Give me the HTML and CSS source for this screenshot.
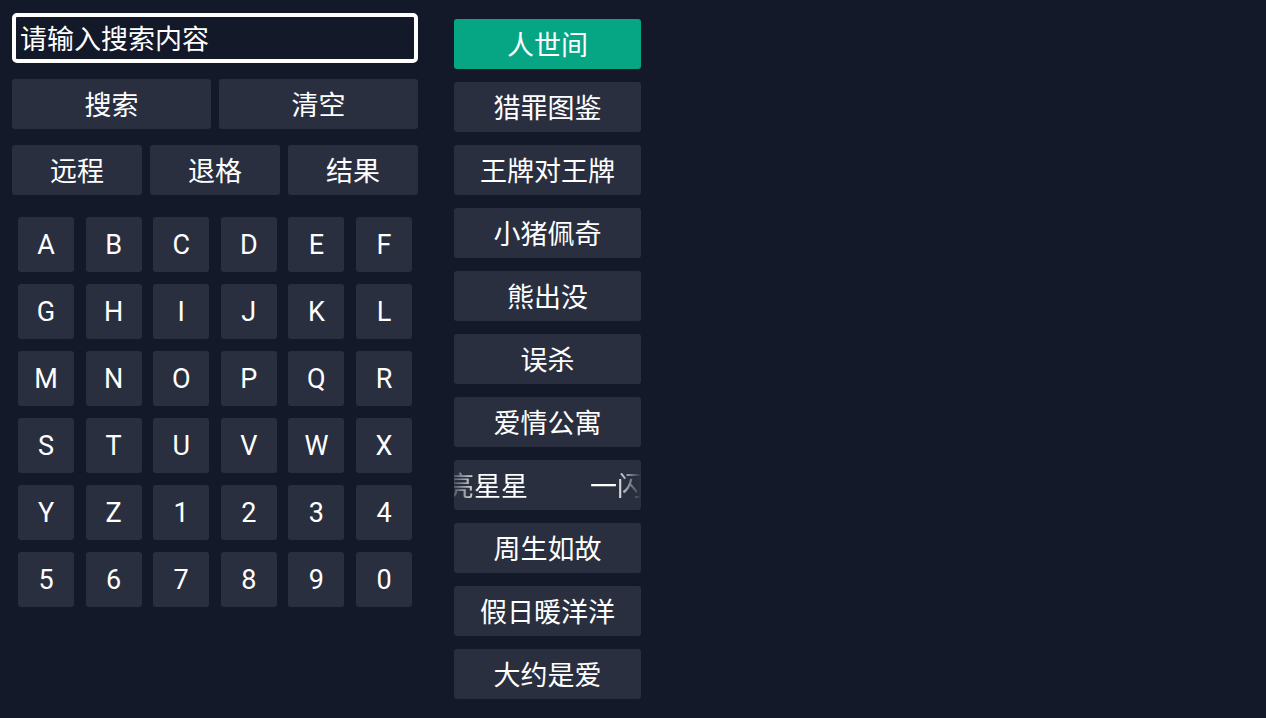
FILE: index.html
```html
<!DOCTYPE html>
<html lang="zh">
<head>
<meta charset="utf-8">
<title>搜索</title>
<link rel="stylesheet" href="styles.css">
</head>
<body>
<div class="page">
  <div class="left">
    <input class="search" type="text" placeholder="请输入搜索内容">
    <div class="row two">
      <div class="btn">搜索</div>
      <div class="btn">清空</div>
    </div>
    <div class="row three">
      <div class="btn">远程</div>
      <div class="btn">退格</div>
      <div class="btn">结果</div>
    </div>
    <div class="keys">
      <div class="key">A</div><div class="key">B</div><div class="key">C</div><div class="key">D</div><div class="key">E</div><div class="key">F</div>
      <div class="key">G</div><div class="key">H</div><div class="key">I</div><div class="key">J</div><div class="key">K</div><div class="key">L</div>
      <div class="key">M</div><div class="key">N</div><div class="key">O</div><div class="key">P</div><div class="key">Q</div><div class="key">R</div>
      <div class="key">S</div><div class="key">T</div><div class="key">U</div><div class="key">V</div><div class="key">W</div><div class="key">X</div>
      <div class="key">Y</div><div class="key">Z</div><div class="key">1</div><div class="key">2</div><div class="key">3</div><div class="key">4</div>
      <div class="key">5</div><div class="key">6</div><div class="key">7</div><div class="key">8</div><div class="key">9</div><div class="key">0</div>
    </div>
  </div>
  <div class="results">
    <div class="item active">人世间</div>
    <div class="item">猎罪图鉴</div>
    <div class="item">王牌对王牌</div>
    <div class="item">小猪佩奇</div>
    <div class="item">熊出没</div>
    <div class="item">误杀</div>
    <div class="item">爱情公寓</div>
    <div class="item marquee"><span class="track"><span class="seg">一闪一闪亮星星</span><span class="seg">一闪一闪亮星星</span></span></div>
    <div class="item">周生如故</div>
    <div class="item">假日暖洋洋</div>
    <div class="item">大约是爱</div>
  </div>
</div>
</body>
</html>
```
FILE: styles.css
```css
html, body {
  margin: 0;
  padding: 0;
  background: #131929;
  height: 100%;
  overflow: hidden;
}
body {
  font-family: Roboto, "Noto Sans CJK SC", sans-serif;
  color: #ffffff;
}
.page {
  display: flex;
  padding: 13px 0 0 12px;
}
.left {
  width: 406px;
  display: flex;
  flex-direction: column;
}
.search {
  box-sizing: border-box;
  width: 406px;
  height: 50px;
  margin: 0;
  border: 4px solid #ffffff;
  border-radius: 5px;
  background: #131929;
  color: #ffffff;
  font-family: "Noto Sans CJK SC", sans-serif;
  font-size: 27px;
  padding: 0 0 2px 4px;
  outline: none;
}
.search::placeholder {
  color: #ffffff;
  opacity: 1;
}
.row {
  display: grid;
  margin-top: 16px;
  height: 50px;
  column-gap: 8px;
}
.row.two { grid-template-columns: 1fr 1fr; }
.row.three { grid-template-columns: 1fr 1fr 1fr; }
.btn {
  background: #2a2f40;
  border-radius: 3px;
  display: flex;
  align-items: center;
  justify-content: center;
  font-family: "Noto Sans CJK SC", sans-serif;
  font-size: 27px;
  padding-bottom: 2px;
  box-sizing: border-box;
}
.keys {
  margin: 22px 6px 0;
  display: grid;
  grid-template-columns: repeat(6, 56px);
  grid-auto-rows: 55px;
  column-gap: 11.6px;
  row-gap: 12px;
}
.key {
  background: #2a2f40;
  border-radius: 3px;
  display: flex;
  align-items: center;
  justify-content: center;
  font-size: 27px;
}
.results {
  margin: 6px 0 0 36px;
  width: 187px;
  display: flex;
  flex-direction: column;
  row-gap: 13px;
}
.item {
  height: 50px;
  background: #2a2f40;
  border-radius: 3px;
  display: flex;
  align-items: center;
  justify-content: center;
  font-family: "Noto Sans CJK SC", sans-serif;
  font-size: 27px;
  padding-bottom: 2px;
  box-sizing: border-box;
  white-space: nowrap;
}
.item.active {
  background: #06a584;
}
.item.marquee {
  justify-content: flex-start;
  overflow: hidden;
}
.track {
  display: flex;
  margin-left: -115px;
  -webkit-mask-image: linear-gradient(to right, transparent 108px, #000 140px, #000 276px, transparent 302px);
  mask-image: linear-gradient(to right, transparent 108px, #000 140px, #000 276px, transparent 302px);
}
.seg {
  padding-right: 62px;
}
```
